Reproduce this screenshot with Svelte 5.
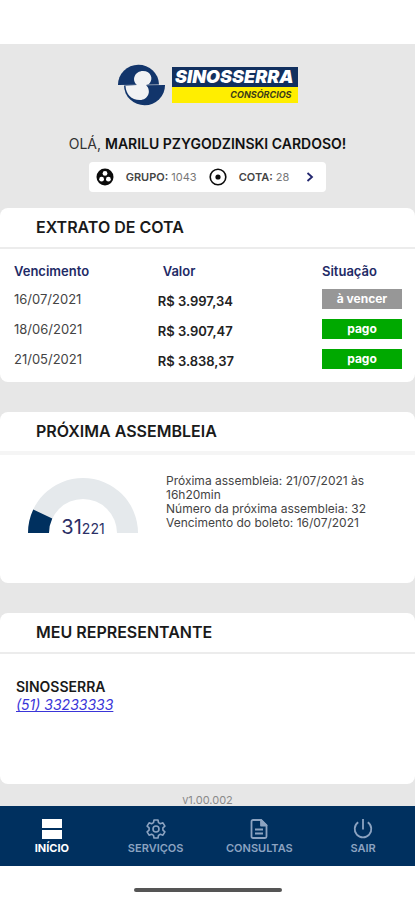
<script>
  const parcelas = [
    { vencimento: '16/07/2021', valor: 'R$ 3.997,34', situacao: 'à vencer', pago: false },
    { vencimento: '18/06/2021', valor: 'R$ 3.907,47', situacao: 'pago', pago: true },
    { vencimento: '21/05/2021', valor: 'R$ 3.838,37', situacao: 'pago', pago: true }
  ];

  const atual = 31;
  const total = 221;
  const angle = Math.PI * (1 - atual / total);
  const cx = 55;
  const cy = 55;
  const outer = 55;
  const inner = 34;
  const point = (r) => `${cx + r * Math.cos(angle)} ${cy - r * Math.sin(angle)}`;
  const progress = `M0 55 A${outer} ${outer} 0 0 1 ${point(outer)} L${point(inner)} A${inner} ${inner} 0 0 0 ${cx - inner} 55 Z`;
</script>

<div class="app">
  <main>
    <header class="brand">
      <svg class="mark" viewBox="0 0 47 42" aria-hidden="true">
        <path fill="#12356b" d="M0 21A20.500 20 0 0 1 41 20.500Z" />
        <path fill="#12356b" d="M47 21A20.500 20 0 0 1 6 21.500Z" />
        <path fill="#f1f2f4" d="M19 21C13 16 17 7 25 7c8 0 11 8 6 13l-3 1c6 6 2 15-6 15C13 36 8 30 7.500 22Z" />
      </svg>
      <div class="wordmark">
        <span class="name">SINOSSERRA</span>
        <span class="sub">CONSÓRCIOS</span>
      </div>
    </header>

    <p class="hello">OLÁ, <strong>MARILU PZYGODZINSKI CARDOSO!</strong></p>

    <button class="quota" type="button">
      <svg width="18" height="18" viewBox="0 0 18 18" aria-hidden="true">
        <circle cx="9" cy="9" r="8.5" fill="#0b0b0b" />
        <circle cx="9" cy="5.4" r="2.4" fill="#fff" />
        <circle cx="5.6" cy="11.2" r="2.4" fill="#fff" />
        <circle cx="12.4" cy="11.2" r="2.4" fill="#fff" />
      </svg>
      <span class="grupo"><b>GRUPO:</b> 1043</span>
      <svg width="18" height="18" viewBox="0 0 18 18" aria-hidden="true">
        <circle cx="9" cy="9" r="7.8" fill="none" stroke="#0b0b0b" stroke-width="1.6" />
        <circle cx="9" cy="9" r="2.6" fill="#0b0b0b" />
      </svg>
      <span class="cota"><b>COTA:</b> 28</span>
      <svg width="8" height="10" viewBox="0 0 8 10" aria-hidden="true">
        <path d="M1.5 1 6 5 1.5 9" fill="none" stroke="#22266e" stroke-width="1.8" />
      </svg>
    </button>

    <section class="card">
      <h2>EXTRATO DE COTA</h2>
      <table>
        <thead>
          <tr><th class="venc">Vencimento</th><th class="valor">Valor</th><th class="sit">Situação</th></tr>
        </thead>
        <tbody>
          {#each parcelas as p}
            <tr>
              <td>{p.vencimento}</td>
              <td class="valor">{p.valor}</td>
              <td class="sit"><span class="badge" class:pago={p.pago}>{p.situacao}</span></td>
            </tr>
          {/each}
        </tbody>
      </table>
    </section>

    <section class="card">
      <h2 class="thick">PRÓXIMA ASSEMBLEIA</h2>
      <div class="assembly">
        <div class="gauge">
          <svg viewBox="0 0 110 55" aria-hidden="true">
            <path fill="#e5e9ec" d="M0 55A55 55 0 0 1 110 55H89A34 34 0 0 0 21 55Z" />
            <path fill="#00305f" d={progress} />
          </svg>
          <p class="count">{atual}<small>{total}</small></p>
        </div>
        <div class="info">
          <p>Próxima assembleia: 21/07/2021 às 16h20min</p>
          <p>Número da próxima assembleia: 32</p>
          <p>Vencimento do boleto: 16/07/2021</p>
        </div>
      </div>
    </section>

    <section class="card">
      <h2>MEU REPRESENTANTE</h2>
      <div class="rep">
        <strong>SINOSSERRA</strong>
        <a href="tel:5133233333">(51) 33233333</a>
      </div>
    </section>

    <p class="version">v1.00.002</p>
  </main>

  <nav>
    <a href="#inicio" class="active" aria-current="page">
      <svg viewBox="0 0 20 20" aria-hidden="true">
        <path fill="currentColor" d="M0 0h20v9H0zM0 11h20v9H0z" />
      </svg>
      INÍCIO
    </a>
    <a href="#servicos">
      <svg viewBox="0 0 20 20" fill="none" stroke="currentColor" stroke-width="1.6" stroke-linejoin="round" aria-hidden="true">
        <path d="M8 1h4l.5 2.6 1.9 1.1 2.5-.9 2 3.4-2 1.7v2.2l2 1.7-2 3.4-2.5-.9-1.9 1.1L12 19H8l-.5-2.6-1.9-1.1-2.5.9-2-3.4 2-1.7V8.900l-2-1.7 2-3.4 2.5.9 1.900-1.100Z" />
        <circle cx="10" cy="10" r="3" />
      </svg>
      SERVIÇOS
    </a>
    <a href="#consultas">
      <svg viewBox="0 0 20 20" fill="none" stroke="currentColor" stroke-width="1.8" stroke-linejoin="round" aria-hidden="true">
        <path d="M4 1h8l5.500 5.500V17.500A1.500 1.500 0 0 1 16 19H4a1.500 1.500 0 0 1-1.500-1.500v-15A1.500 1.500 0 0 1 4 1Z" />
        <path fill="currentColor" d="M12 1v5.500h5.500Z" />
        <path d="M6 10.500h8M6 14.500h8" />
      </svg>
      CONSULTAS
    </a>
    <a href="#sair">
      <svg viewBox="0 0 20 20" fill="none" stroke="currentColor" stroke-width="1.8" aria-hidden="true">
        <path d="M10 0v10.500M5.200 3.300a8.300 8.300 0 1 0 9.600 0" />
      </svg>
      SAIR
    </a>
  </nav>

  <footer><span></span></footer>
</div>

<style>
  :global(body) {
    margin: 0;
    background: #fff;
  }
  .app {
    display: flex;
    flex-direction: column;
    min-height: 100vh;
    box-sizing: border-box;
    padding-top: 44px;
    font-family: Inter, Roboto, sans-serif;
    color: #1a1a1a;
  }
  p,
  h2 {
    margin: 0;
  }
  main {
    flex: 1;
    display: flex;
    flex-direction: column;
    background: #e7e7e7;
    padding-top: 20px;
  }
  .brand {
    display: flex;
    justify-content: center;
    align-items: center;
    gap: 7px;
    height: 42px;
  }
  .mark {
    width: 47px;
    height: 42px;
  }
  .wordmark {
    display: flex;
    flex-direction: column;
    width: 126px;
    background: #ffee00;
    font-style: italic;
    text-align: right;
  }
  .name {
    background: #12305f;
    color: #fff;
    font-size: 18px;
    font-weight: 900;
    line-height: 20px;
    padding-right: 4px;
  }
  .sub {
    font-size: 9px;
    font-weight: 700;
    line-height: 16px;
    color: #3c3c18;
    padding-right: 6px;
  }
  .hello {
    margin-top: 28px;
    text-align: center;
    font-size: 14px;
    line-height: 20px;
    color: #333;
  }
  .hello strong {
    font-weight: 600;
    color: #111;
  }
  .quota {
    align-self: center;
    display: flex;
    align-items: center;
    height: 30px;
    margin-top: 8px;
    padding: 0 12px 0 7px;
    border: 0;
    border-radius: 4px;
    background: #fff;
    font: 400 11px/16px Inter, sans-serif;
    color: #777;
  }
  .quota b {
    font-weight: 600;
    color: #444;
  }
  .grupo,
  .cota {
    padding: 0 12px;
  }
  .cota {
    padding-right: 17px;
  }
  .card {
    min-height: 171px;
    margin-bottom: 30px;
    border-radius: 8px;
    background: #fff;
  }
  .quota + .card {
    margin-top: 16px;
    min-height: 174px;
  }
  h2 {
    padding: 0 36px;
    border-bottom: 2px solid #ececec;
    font-size: 16px;
    font-weight: 600;
    line-height: 39px;
  }
  h2.thick {
    border-bottom: 4px solid #f5f5f5;
  }
  table {
    width: 100%;
    margin-top: 9px;
    border-collapse: collapse;
    table-layout: fixed;
    font-size: 13px;
    line-height: 20px;
  }
  th,
  td {
    height: 30px;
    padding: 0 0 0 14px;
    text-align: left;
    vertical-align: middle;
    box-sizing: border-box;
  }
  th {
    color: #1e2a66;
    font-weight: 600;
    height: 26px;
  }
  td {
    color: #444;
  }
  .venc {
    width: 38%;
  }
  th.valor {
    padding-left: 5px;
  }
  td.valor {
    padding: 3px 0 0;
    font-weight: 600;
    color: #222;
  }
  .sit {
    width: 93px;
    padding: 0 13px 0 0;
  }
  .badge {
    display: block;
    background: #979797;
    color: #fff;
    text-align: center;
    font-size: 12px;
    font-weight: 700;
    line-height: 20px;
  }
  .badge.pago {
    background: #00a900;
  }
  .assembly {
    display: flex;
    align-items: flex-start;
    gap: 28px;
    padding: 19px 28px 0;
  }
  .gauge {
    position: relative;
    flex: none;
    width: 110px;
    margin-top: 4px;
  }
  .gauge svg {
    display: block;
    width: 100%;
  }
  .count {
    position: absolute;
    inset: auto 0 -8px;
    text-align: center;
    font-size: 20px;
    line-height: 24px;
    color: #2b2f66;
  }
  .count small {
    font-size: 14px;
  }
  .info {
    font-size: 12px;
    line-height: 14px;
    color: #444;
  }
  .rep {
    display: flex;
    flex-direction: column;
    align-items: flex-start;
    padding: 24px 16px 0;
    font-size: 14px;
    line-height: 18px;
  }
  .rep strong {
    font-weight: 600;
  }
  .rep a {
    color: #3a35d8;
    font-style: italic;
  }
  .version {
    margin-top: -20px;
    text-align: center;
    font-size: 11px;
    line-height: 12px;
    color: #8a8a8a;
  }
  nav {
    display: flex;
    height: 60px;
    background: #00305f;
  }
  nav a {
    flex: 1;
    display: flex;
    flex-direction: column;
    align-items: center;
    gap: 1px;
    padding-top: 13px;
    color: #8ca3c1;
    font-size: 11px;
    font-weight: 600;
    line-height: 16px;
    text-decoration: none;
  }
  nav a.active {
    color: #fff;
    font-weight: 700;
  }
  nav svg {
    width: 20px;
    height: 20px;
  }
  footer {
    display: flex;
    justify-content: center;
    height: 34px;
  }
  footer span {
    width: 148px;
    height: 4px;
    margin-top: 22px;
    border-radius: 2px;
    background: #555;
  }
</style>
